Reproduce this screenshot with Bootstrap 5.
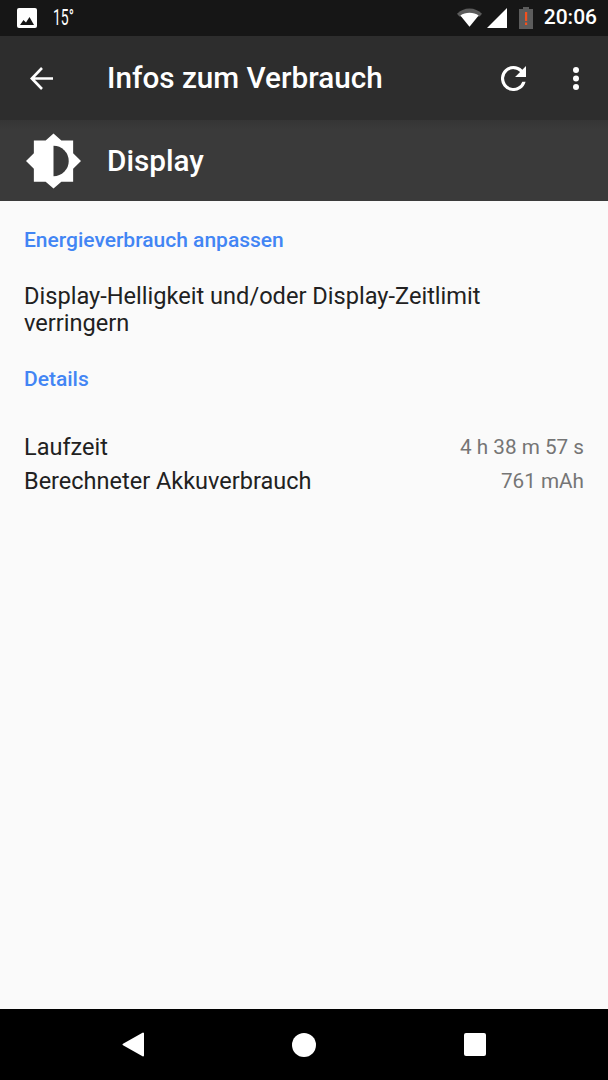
<!DOCTYPE html>
<html lang="de">
<head>
  <meta charset="UTF-8">
  <meta name="viewport" content="width=device-width, initial-scale=1.0">
  <title>Infos zum Verbrauch</title>
  <link rel="stylesheet" href="https://cdn.jsdelivr.net/npm/bootstrap@5.3.0/dist/css/bootstrap.min.css">
  <style>
    html, body {
      height: 1080px;
      overflow: hidden;
    }
    body {
      font-family: Roboto, sans-serif;
      background-color: #fafafa;
      color: #212121;
    }
    .status-bar {
      height: 36px;
      background: #161616;
      color: #fff;
      padding: 0 11px 0 17px;
    }
    .status-temp {
      font-size: 22.500px;
      margin-left: 16px;
      transform: scaleX(.62);
      transform-origin: left center;
    }
    .status-wifi {
      margin-top: -1px;
      margin-right: 1px;
    }
    .status-signal {
      margin-left: 4px;
    }
    .status-battery {
      margin-left: 12px;
    }
    .status-time {
      font-size: 21px;
      margin-left: 11px;
      font-weight: 500;
    }
    .app-bar {
      height: 84px;
      background: #2d2d2d;
      color: #fff;
      padding-left: 30px;
      padding-right: 29px;
    }
    .app-title {
      font-size: 29.700px;
      font-weight: 500;
      margin: 0 0 0 54px;
      flex-grow: 1;
    }
    .app-dots {
      margin-left: 47px;
    }
    .sub-bar {
      height: 81px;
      background: linear-gradient(#353535, #3a3a3a 12%);
      color: #fff;
      padding-left: 26px;
    }
    .sub-title {
      font-size: 29.700px;
      font-weight: 500;
      margin: 0 0 0 26px;
    }
    .content-area {
      flex-grow: 1;
      padding: 0 24px;
    }
    .group-title {
      color: #4285f4;
      font-size: 21px;
      font-weight: 500;
      line-height: 24px;
      margin: 0;
    }
    .first-title {
      margin-top: 27px;
    }
    .details-title {
      margin-top: 30px;
    }
    .hint-text {
      font-size: 23.600px;
      line-height: 27px;
      margin: 31px 0 0;
    }
    .detail-list {
      margin-top: 39px;
    }
    .detail-row {
      font-size: 23.500px;
      line-height: 34px;
    }
    .detail-value {
      font-size: 20.700px;
      color: #757575;
    }
    .nav-bar {
      height: 71px;
      background: #000;
      padding: 0 122px;
    }
  </style>
</head>
<body class="d-flex flex-column">
  <div class="status-bar d-flex align-items-center flex-shrink-0">
    <svg width="20" height="20" viewBox="0 0 20 20"><path fill="#fff" d="M2 0h16a2 2 0 0 1 2 2v16a2 2 0 0 1-2 2H2a2 2 0 0 1-2-2V2a2 2 0 0 1 2-2z"/><path fill="#161616" d="M3 17l3.500-5 2.500 2.500 3.500-5.500 4.500 8z"/></svg>
    <span class="status-temp flex-grow-1">15°</span>
    <svg class="status-wifi" width="25" height="20" viewBox="0 0 26 20"><path fill="#5c5c5c" d="M0 5.500C3.500 2 8 0 13 0s9.500 2 13 5.500l-2.500 3H2.500z"/><path fill="#fff" d="M3.500 7.500C6 5.500 9.400 4.500 13 4.500s7 1 9.500 3L13 19z"/></svg>
    <svg class="status-signal" width="20" height="20" viewBox="0 0 20 20"><path fill="#fff" d="M20 0v20H0z"/></svg>
    <svg class="status-battery" width="14" height="22" viewBox="0 0 14 22"><path fill="#5c5c5c" d="M4 0h6v2h4v20H0V2h4z"/><path fill="#f4511e" d="M6 5h2.200v9H6zM6 15.500h2.200V18H6z"/></svg>
    <span class="status-time">20:06</span>
  </div>

  <div class="app-bar d-flex align-items-center flex-shrink-0">
    <svg width="23" height="23" viewBox="0 0 23 23"><path fill="none" stroke="#fff" stroke-width="2.600" d="M23 11.500H2.500M12 1L1.800 11.500 12 22"/></svg>
    <h1 class="app-title">Infos zum Verbrauch</h1>
    <svg width="25" height="25" viewBox="4 4 16 16"><path fill="#fff" d="M17.650 6.350A7.960 7.960 0 0 0 12 4a8 8 0 1 0 7.730 10h-2.080A6 6 0 1 1 12 6c1.660 0 3.140.69 4.220 1.780L13 11h7V4z"/></svg>
    <svg class="app-dots" width="6" height="23" viewBox="0 0 6 23"><circle fill="#fff" cx="3" cy="3" r="3"/><circle fill="#fff" cx="3" cy="11.500" r="3"/><circle fill="#fff" cx="3" cy="20" r="3"/></svg>
  </div>

  <div class="sub-bar d-flex align-items-center flex-shrink-0">
    <svg width="55" height="56" viewBox="0 0 56 56"><path fill="#fff" d="M28 0l8 7h12v13l8 8-8 8v13H36l-8 7-8-7H8V36l-8-8 8-8V7h12z"/><path fill="#3a3a3a" d="M28 12.500a15.500 15.500 0 0 1 0 31z"/></svg>
    <h2 class="sub-title">Display</h2>
  </div>

  <div class="content-area">
    <h3 class="group-title first-title">Energieverbrauch anpassen</h3>
    <p class="hint-text">Display-Helligkeit und/oder Display-Zeitlimit verringern</p>
    <h3 class="group-title details-title">Details</h3>
    <div class="detail-list">
      <div class="detail-row d-flex justify-content-between align-items-center">
        <span>Laufzeit</span><span class="detail-value">4 h 38 m 57 s</span>
      </div>
      <div class="detail-row d-flex justify-content-between align-items-center">
        <span>Berechneter Akkuverbrauch</span><span class="detail-value">761 mAh</span>
      </div>
    </div>
  </div>

  <div class="nav-bar d-flex justify-content-between align-items-center flex-shrink-0">
    <svg width="22" height="25" viewBox="0 0 22 25"><path fill="#fff" stroke="#fff" stroke-width="2" stroke-linejoin="round" d="M21 1.500v22L1.500 12.500z"/></svg>
    <svg width="24" height="24" viewBox="0 0 24 24"><circle fill="#fff" cx="12" cy="12" r="12"/></svg>
    <svg width="22" height="23" viewBox="0 0 22 23"><rect fill="#fff" width="22" height="23" rx="2"/></svg>
  </div>

  <script src="https://cdn.jsdelivr.net/npm/bootstrap@5.3.0/dist/js/bootstrap.bundle.min.js"></script>
</body>
</html>
